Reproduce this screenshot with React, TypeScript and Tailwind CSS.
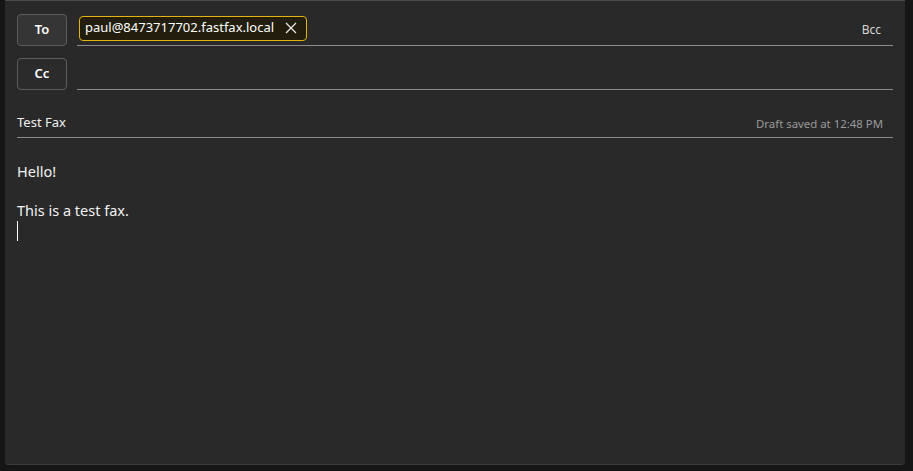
import React from "react";

export default function App() {
  return (
    <div className="w-[913px] h-[471px] bg-[#161616] pl-[5px] pr-[8px] pb-[6px] flex" style={{ fontFamily: '"Noto Sans", "Open Sans", sans-serif' }}>
      <div className="flex-1 bg-[#292929] border-t border-t-[#4a4a4a] border-b border-b-[#3c3c3c] rounded-b-[4px] flex flex-col pl-[12px] pr-[12px] pt-[12px]">
        {/* To row */}
        <div className="flex items-center gap-[10px] h-[33px]">
          <button className="w-[50px] h-[32px] rounded-[4px] border border-[#5c5c5c] bg-[#353535] text-white text-[13px] font-semibold flex items-center justify-center">To</button>
          <div className="flex-1 h-[33px] border-b border-[#8a8a8a] flex items-center justify-between">
            <div className="flex items-center gap-[8px] h-[25px] -mt-[2px] ml-[2px] pl-[5px] pr-[9px] rounded-[4px] border border-[#e3b40f] bg-[#221d0c] text-white text-[13px]">
              <span>paul@8473717702.fastfax.local</span>
              <svg width="12" height="12" viewBox="0 0 12 12" className="ml-[3px]">
                <path d="M1 1 L11 11 M11 1 L1 11" stroke="#e8e8e8" strokeWidth="1.3" />
              </svg>
            </div>
            <span className="text-[12px] text-[#d6d6d6] mr-[12px] mt-[2px]">Bcc</span>
          </div>
        </div>
        {/* Cc row */}
        <div className="flex items-center gap-[10px] h-[33px] mt-[11px]">
          <button className="w-[50px] h-[32px] rounded-[4px] border border-[#5c5c5c] bg-[#2b2b2b] text-white text-[13px] font-semibold flex items-center justify-center">Cc</button>
          <div className="flex-1 h-[33px] border-b border-[#8a8a8a]"></div>
        </div>
        {/* Subject */}
        <div className="flex items-end justify-between h-[44px] mt-[4px] border-b border-[#8a8a8a] pb-[5px]">
          <span className="text-[13px] text-[#f0f0f0]">Test Fax</span>
          <span className="text-[11.4px] text-[#9a9a9a] mr-[10px]">Draft saved at 12:48 PM</span>
        </div>
        {/* Body */}
        <div className="mt-[23px] text-[14.5px] text-[#f2f2f2] leading-[20px]">
          <div>Hello!</div>
          <div className="h-[19px]"></div>
          <div>This is a test fax.</div>
          <div className="w-[1px] h-[20px] bg-white mt-[1px]"></div>
        </div>
      </div>
    </div>
  );
}
